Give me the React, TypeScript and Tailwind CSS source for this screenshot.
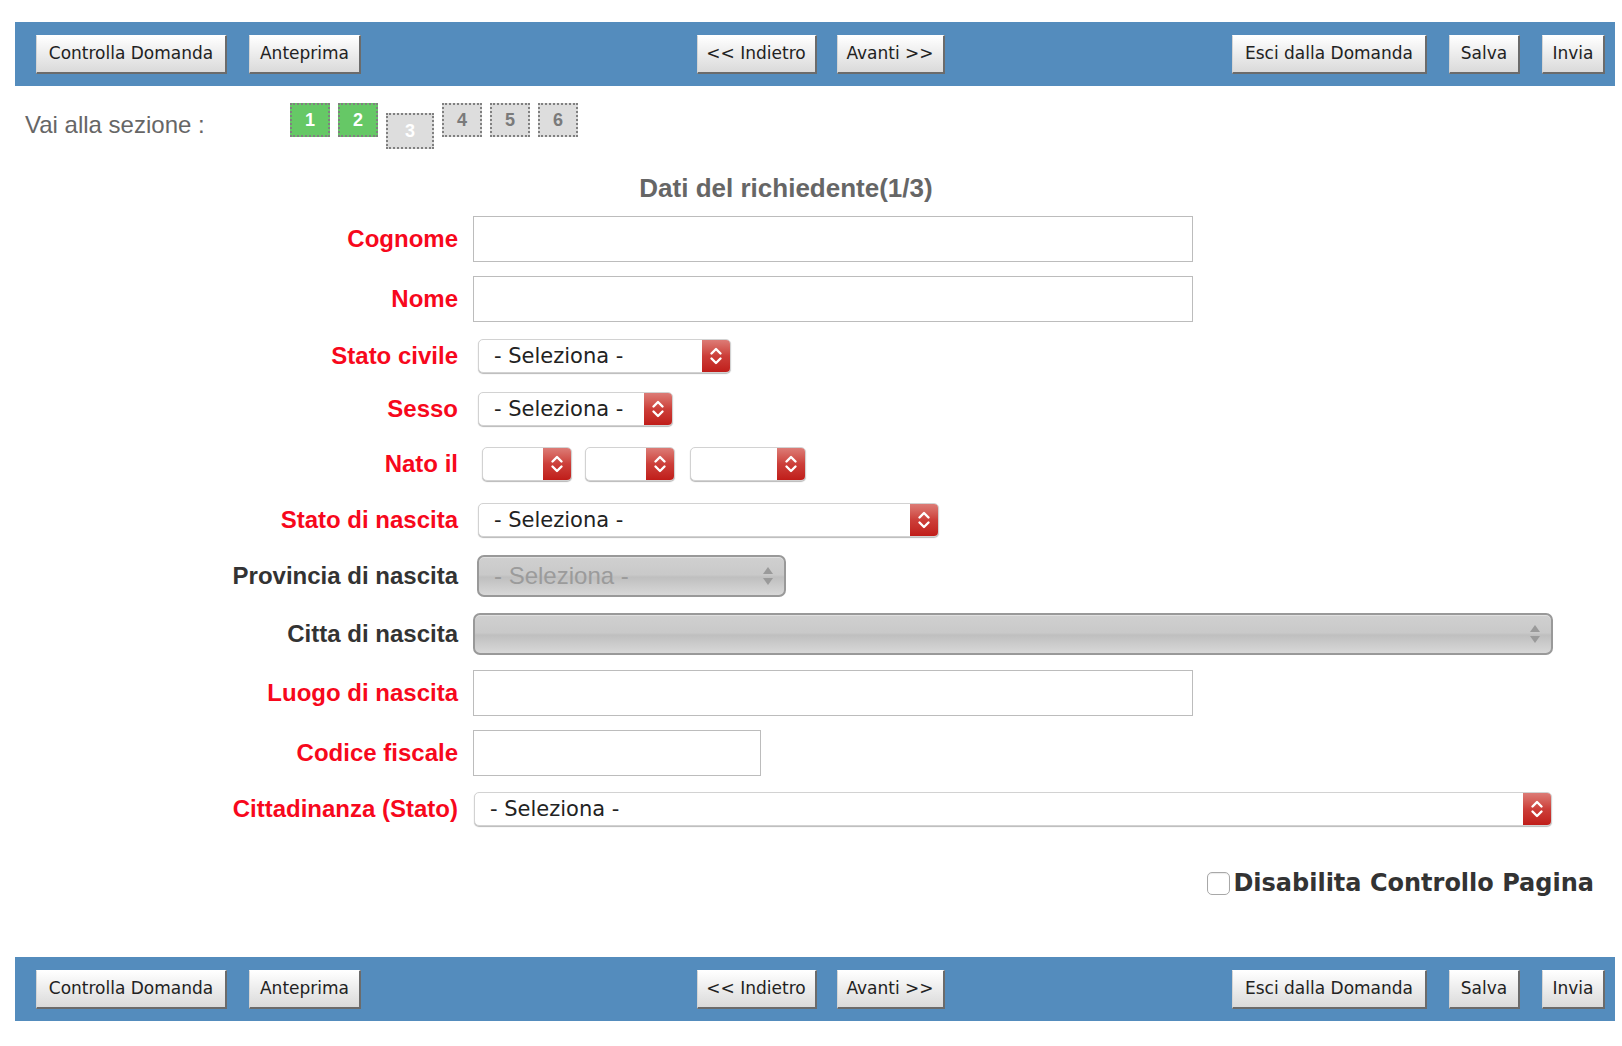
import React from 'react';

// Barra pulsanti (in alto e in basso)
const Btn: React.FC<{ w: string; children: React.ReactNode }> = ({ w, children }) => (
  <button
    type="button"
    className={`h-[39px] ${w} flex items-center justify-center bg-linear-to-b from-white to-[#dadada] border-t border-l border-t-white border-l-[#d4d4d4] border-r-2 border-b-2 border-r-[#6b6b6b] border-b-[#6b6b6b] text-[17px] leading-none text-[#222] font-['DejaVu_Sans',sans-serif] whitespace-nowrap`}
  >
    {children}
  </button>
);

const Toolbar: React.FC = () => (
  <div className="ml-[15px] w-[1600px] h-[64px] bg-[#548cbd] grid grid-cols-[1fr_auto_1fr] items-center pl-[21px] pr-[10px]">
    <div className="flex gap-[22px]">
      <Btn w="w-[191px]">Controlla Domanda</Btn>
      <Btn w="w-[112px]">Anteprima</Btn>
    </div>
    <div className="flex gap-[20px]">
      <Btn w="w-[120px]">&lt;&lt; Indietro</Btn>
      <Btn w="w-[108px]">Avanti &gt;&gt;</Btn>
    </div>
    <div className="flex justify-end gap-[22px]">
      <Btn w="w-[195px]">Esci dalla Domanda</Btn>
      <Btn w="w-[71px]">Salva</Btn>
      <Btn w="w-[63px]">Invia</Btn>
    </div>
  </div>
);

const Chevrons = () => (
  <svg width="16" height="22" viewBox="0 0 16 22" fill="none" stroke="white" strokeWidth="2.4" strokeLinecap="round" strokeLinejoin="round">
    <path d="M3.5 8.5 L8 4 L12.5 8.5" />
    <path d="M3.5 13.5 L8 18 L12.5 13.5" />
  </svg>
);

const RedSelect: React.FC<{ w: string; text?: string }> = ({ w, text }) => (
  <div className={`flex h-[34px] ${w} rounded-[5px] border border-[#d2d2d2] shadow-[0_1px_1px_rgba(0,0,0,0.28)] bg-white overflow-hidden`}>
    <div className="flex-1 flex items-center pl-[15px] pt-[1px] text-[21px] text-[#222] font-['DejaVu_Sans',sans-serif] whitespace-nowrap">
      {text}
    </div>
    <div className="w-[28px] bg-linear-to-b from-[#dc7b76] via-[#cc3e39] to-[#c01c19] flex items-center justify-center">
      <Chevrons />
    </div>
  </div>
);

const DisabledSelect: React.FC<{ w: string; text?: string }> = ({ w, text }) => (
  <div className={`flex items-center h-[42px] ${w} rounded-[7px] border-2 border-[#999] bg-[linear-gradient(to_bottom,#d0d0d0_0%,#c9c9c9_47%,#bfbfbf_53%,#d8d8d8_100%)] shadow-[inset_0_1px_0_rgba(255,255,255,0.35)]`}>
    <div className="flex-1 pl-[15px] text-[24px] text-[#9b9b9b] font-['Liberation_Sans',Arial,sans-serif] whitespace-nowrap">
      {text}
    </div>
    <svg width="12" height="22" viewBox="0 0 12 22" className="mr-[10px]">
      <path d="M6 2 L11 9 L1 9 Z" fill="#9a9a9a" />
      <path d="M6 20 L11 13 L1 13 Z" fill="#9a9a9a" />
    </svg>
  </div>
);

const Row: React.FC<{ label: string; red?: boolean; mt: string; children: React.ReactNode }> = ({ label, red, mt, children }) => (
  <div className={`flex items-center ${mt}`}>
    <div
      className={`w-[458px] shrink-0 text-right text-[24px] font-bold leading-none font-['Liberation_Sans',Arial,sans-serif] ${red ? 'text-[#f7081c]' : 'text-[#333]'}`}
    >
      {label}
    </div>
    <div className="pl-[15px] flex items-center">{children}</div>
  </div>
);

const TextInput: React.FC<{ w: string }> = ({ w }) => (
  <input type="text" className={`h-[46px] ${w} border border-[#bcbcbc] bg-white outline-none`} />
);

const sezioni = [
  { n: 1, cls: 'bg-[#66c866] text-white' },
  { n: 2, cls: 'bg-[#66c866] text-white' },
  { n: 3, cls: 'bg-[#dddddd] text-white w-[48px] h-[36px] mt-[10px]' },
  { n: 4, cls: 'bg-[#dddddd] text-[#7a7a7a]' },
  { n: 5, cls: 'bg-[#dddddd] text-[#7a7a7a]' },
  { n: 6, cls: 'bg-[#dddddd] text-[#7a7a7a]' },
];

const App: React.FC = () => {
  return (
    <div className="w-[1622px] min-h-[1046px] bg-white pt-[22px] font-['Liberation_Sans',Arial,sans-serif]">
      <Toolbar />

      {/* Vai alla sezione */}
      <div className="flex items-start mt-[17px]">
        <div className="ml-[25px] mt-[8px] w-[265px] text-[24px] leading-[28px] text-[#666]">Vai alla sezione :</div>
        <div className="flex items-start gap-[8px]">
          {sezioni.map((s) => (
            <div
              key={s.n}
              className={`w-[40px] h-[34px] border-2 border-dotted border-[#808080] flex items-center justify-center text-[18px] font-bold ${s.cls}`}
            >
              {s.n}
            </div>
          ))}
        </div>
      </div>

      <div className="ml-[15px] w-[1542px] mt-[24px] text-center text-[26px] leading-[30px] font-bold text-[#666]">
        Dati del richiedente(1/3)
      </div>

      <Row label="Cognome" red mt="mt-[13px]">
        <TextInput w="w-[720px]" />
      </Row>
      <Row label="Nome" red mt="mt-[14px]">
        <TextInput w="w-[720px]" />
      </Row>
      <Row label="Stato civile" red mt="mt-[17px]">
        <div className="ml-[5px]">
          <RedSelect w="w-[253px]" text="- Seleziona -" />
        </div>
      </Row>
      <Row label="Sesso" red mt="mt-[19px]">
        <div className="ml-[5px]">
          <RedSelect w="w-[195px]" text="- Seleziona -" />
        </div>
      </Row>
      <Row label="Nato il" red mt="mt-[21px]">
        <div className="ml-[9px] flex gap-[13px]">
          <RedSelect w="w-[90px]" />
          <RedSelect w="w-[90px]" />
          <div className="ml-[2px]">
            <RedSelect w="w-[116px]" />
          </div>
        </div>
      </Row>
      <Row label="Stato di nascita" red mt="mt-[22px]">
        <div className="ml-[5px]">
          <RedSelect w="w-[461px]" text="- Seleziona -" />
        </div>
      </Row>
      <Row label="Provincia di nascita" mt="mt-[18px]">
        <div className="ml-[4px]">
          <DisabledSelect w="w-[309px]" text="- Seleziona -" />
        </div>
      </Row>
      <Row label="Citta di nascita" mt="mt-[16px]">
        <DisabledSelect w="w-[1080px]" />
      </Row>
      <Row label="Luogo di nascita" red mt="mt-[15px]">
        <TextInput w="w-[720px]" />
      </Row>
      <Row label="Codice fiscale" red mt="mt-[14px]">
        <TextInput w="w-[288px]" />
      </Row>
      <Row label="Cittadinanza (Stato)" red mt="mt-[16px]">
        <div className="ml-[1px]">
          <RedSelect w="w-[1078px]" text="- Seleziona -" />
        </div>
      </Row>

      {/* Disabilita controllo */}
      <div className="flex justify-end items-center mt-[45px] pr-[28px]">
        <div className="w-[23px] h-[23px] rounded-[5px] border border-[#a8a8a8] bg-white shadow-[inset_0_1px_1px_rgba(0,0,0,0.08)]" />
        <span className="ml-[3px] text-[24px] leading-[24px] font-bold text-[#333] font-['DejaVu_Sans',sans-serif]">
          Disabilita Controllo Pagina
        </span>
      </div>

      <div className="mt-[62px]">
        <Toolbar />
      </div>
    </div>
  );
};

export default App;
